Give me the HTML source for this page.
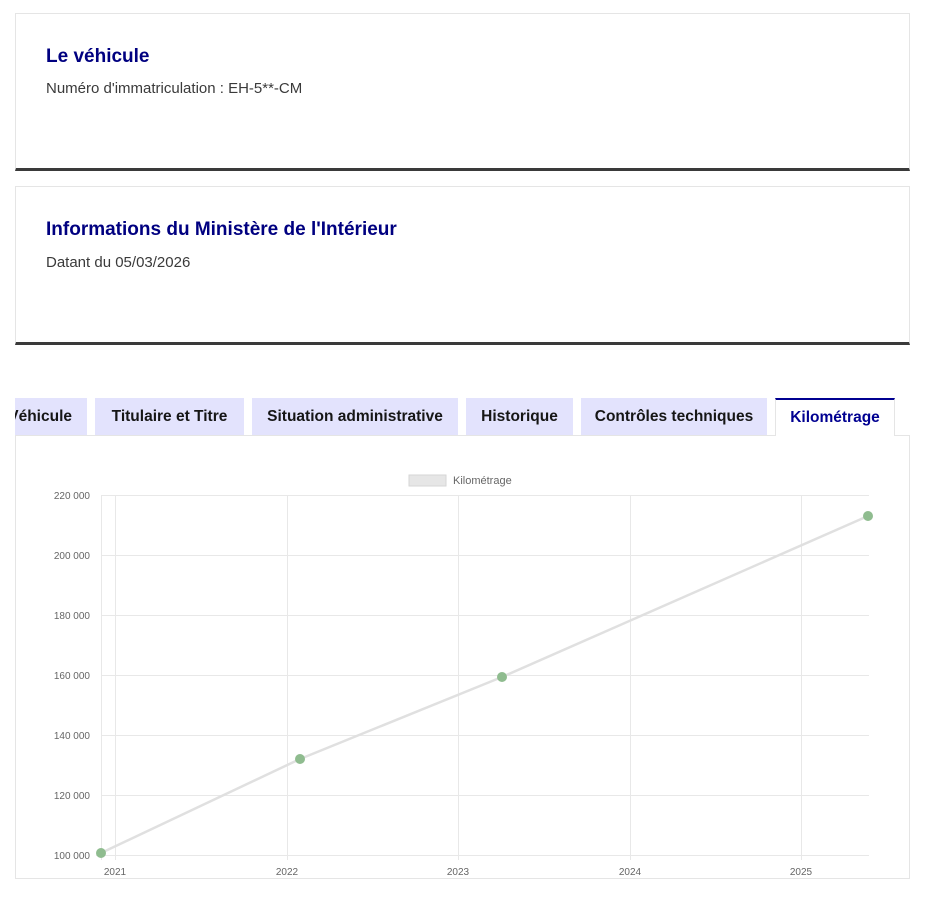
<!DOCTYPE html>
<html><head><meta charset="utf-8"><style>
body{margin:0;width:925px;height:900px;background:#fff;font-family:"Liberation Sans",sans-serif;position:relative;overflow:hidden}
.card{position:absolute;left:15px;width:895px;border:1px solid #e5e5e5;border-bottom:3px solid #3a3a3a;box-sizing:border-box}
.card h2{position:absolute;left:30px;margin:0;font-size:19px;color:#000080;font-weight:bold}
.card p{position:absolute;left:30px;margin:0;font-size:15px;color:#3a3a3a}
.tab{position:absolute;top:398px;height:37px;background:#e3e3fd;color:#161616;font-weight:bold;font-size:15.5px;line-height:37px;text-align:center;box-sizing:border-box}
.tab.act{background:#fff;color:#000091;border-top:2px solid #000091;border-left:1px solid #e5e5e5;border-right:1px solid #e5e5e5;height:38px;line-height:35px}
</style></head><body>
<div class="card" style="top:13px;height:158px"><h2 style="top:32px">Le véhicule</h2><p style="top:66px">Numéro d'immatriculation : EH-5**-CM</p></div>
<div class="card" style="top:186px;height:159px"><h2 style="top:32px">Informations du Ministère de l'Intérieur</h2><p style="top:67px">Datant du 05/03/2026</p></div>
<div class="tab" style="left:15px;width:72px;overflow:hidden"><span style="position:absolute;right:15px;white-space:nowrap">Véhicule</span></div>
<div class="tab" style="left:95px;width:149px">Titulaire et Titre</div>
<div class="tab" style="left:252px;width:206px">Situation administrative</div>
<div class="tab" style="left:466px;width:107px">Historique</div>
<div class="tab" style="left:581px;width:186px">Contrôles techniques</div>
<div style="position:absolute;left:15px;top:435px;width:895px;height:444px;border:1px solid #e5e5e5;box-sizing:border-box"></div>
<div class="tab act" style="left:775px;width:120px">Kilométrage</div>
<svg style="position:absolute;left:0;top:0" width="925" height="900" font-family="Liberation Sans, sans-serif" font-size="10" fill="#666">
<rect x="409" y="475" width="37" height="11" fill="#e6e6e6" stroke="#d6d6d6"/>
<text x="453" y="484" font-size="11">Kilométrage</text>
<g stroke="#e8e8e8" stroke-width="1">
<line x1="101" y1="495.5" x2="869" y2="495.5"/><line x1="101" y1="555.5" x2="869" y2="555.5"/><line x1="101" y1="615.5" x2="869" y2="615.5"/><line x1="101" y1="675.5" x2="869" y2="675.5"/><line x1="101" y1="735.5" x2="869" y2="735.5"/><line x1="101" y1="795.5" x2="869" y2="795.5"/><line x1="96" y1="855.5" x2="869" y2="855.5"/>
<line x1="101.5" y1="495" x2="101.5" y2="860"/>
<line x1="115.5" y1="495" x2="115.5" y2="860"/><line x1="287.5" y1="495" x2="287.5" y2="860"/><line x1="458.5" y1="495" x2="458.5" y2="860"/><line x1="630.5" y1="495" x2="630.5" y2="860"/><line x1="801.5" y1="495" x2="801.5" y2="860"/>
</g>
<g text-anchor="end"><text x="90" y="499">220 000</text><text x="90" y="559">200 000</text><text x="90" y="619">180 000</text><text x="90" y="679">160 000</text><text x="90" y="739">140 000</text><text x="90" y="799">120 000</text><text x="90" y="859">100 000</text></g>
<g text-anchor="middle"><text x="115" y="875">2021</text><text x="287" y="875">2022</text><text x="458" y="875">2023</text><text x="630" y="875">2024</text><text x="801" y="875">2025</text></g>
<polyline points="101,853 300,759 502,677 868,516" fill="none" stroke="#e0e0e0" stroke-width="2.5"/>
<g fill="#8fbc8f"><circle cx="101" cy="853" r="5"/><circle cx="300" cy="759" r="5"/><circle cx="502" cy="677" r="5"/><circle cx="868" cy="516" r="5"/></g>
</svg>
</body></html>
